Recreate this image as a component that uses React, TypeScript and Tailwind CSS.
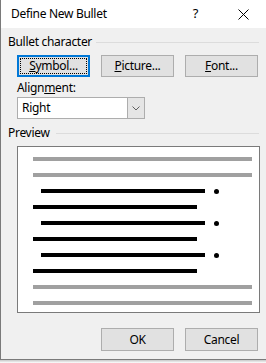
import React from "react";

const font = { fontFamily: '"Noto Sans", "Open Sans", sans-serif' };

function Btn({ children, focused }: { children: React.ReactNode; focused?: boolean }) {
  if (focused) {
    return (
      <div className="w-[73px] h-[22px] bg-[#e1e1e1] border-2 border-[#0078d7] flex items-center justify-center p-[1px]">
        <div className="w-full h-full border border-dotted border-black flex items-center justify-center text-[12px] text-black leading-none">
          {children}
        </div>
      </div>
    );
  }
  return (
    <div className="w-[73px] h-[22px] bg-[#e1e1e1] border border-[#adadad] flex items-center justify-center text-[12px] text-black leading-none">
      {children}
    </div>
  );
}

function Line({ gray, indent, short }: { gray?: boolean; indent?: boolean; short?: boolean }) {
  if (gray) return <div className="h-[4px] w-[219px] bg-[#a0a0a0]" />;
  return (
    <div className="h-[4px] flex items-center">
      <div className={(indent ? "ml-[8px] " : "") + "h-[4px] w-[164px] bg-black"} />
      {indent && !short && <div className="ml-[9px] w-[5px] h-[5px] rounded-full bg-black" />}
    </div>
  );
}

export default function App() {
  return (
    <div className="w-[266px] h-[363px] bg-white overflow-hidden tracking-[-0.3px]" style={font}>
      <div className="w-[266px] h-[360px] border-l border-b border-[#7a7a7a] flex flex-col">
        <div className="h-[28px] bg-white flex items-center text-[12px] text-black">
          <span className="ml-[10px]">Define New Bullet</span>
          <span className="ml-auto mr-[40px] text-[13px]">?</span>
          <svg width="11" height="11" viewBox="0 0 11 11" className="mr-[17px]">
            <path d="M0.5 0.5 L10.5 10.5 M10.5 0.5 L0.5 10.5" stroke="#000" strokeWidth="1" />
          </svg>
        </div>
        <div className="flex-1 bg-[#f0f0f0] flex flex-col text-[12px] text-black">
          <div className="mt-[6px] flex items-center h-[16px]">
            <span className="ml-[7px]">Bullet character</span>
            <div className="flex-1 h-px bg-[#dcdcdc] ml-[4px] mr-[7px]" />
          </div>
          <div className="mt-[5px] ml-[16px] flex gap-[11px]">
            <Btn focused>
              <span><u>S</u>ymbol...</span>
            </Btn>
            <Btn>
              <span><u>P</u>icture...</span>
            </Btn>
            <Btn>
              <span><u>F</u>ont...</span>
            </Btn>
          </div>
          <div className="mt-[3px] ml-[16px] h-[16px] flex items-center">
            <span>Align<u>m</u>ent:</span>
          </div>
          <div className="mt-[1px] ml-[16px] w-[128px] h-[22px] bg-white border border-[#adadad] flex">
            <div className="flex-1 flex items-center pl-[4px]">Right</div>
            <div className="w-[17px] bg-[#e5e5e5] border-l border-[#adadad] flex items-center justify-center">
              <svg width="8" height="5" viewBox="0 0 8 5">
                <path d="M0.5 0.5 L4 4 L7.5 0.5" stroke="#606060" fill="none" strokeWidth="1" />
              </svg>
            </div>
          </div>
          <div className="mt-[6px] flex items-center h-[16px]">
            <span className="ml-[7px]">Preview</span>
            <div className="flex-1 h-px bg-[#dcdcdc] ml-[6px] mr-[7px]" />
          </div>
          <div className="mt-[5px] ml-[16px] w-[243px] h-[167px] bg-white border border-[#7a7a7a] pt-[10px] pl-[15px] flex flex-col gap-[12px]">
            <Line gray />
            <Line gray />
            <Line indent />
            <Line />
            <Line indent />
            <Line />
            <Line indent />
            <Line />
            <Line gray />
            <Line gray />
          </div>
          <div className="mt-[15px] ml-[100px] flex gap-[11px]">
            <div className="w-[73px] h-[23px] bg-[#e1e1e1] border border-[#adadad] flex items-center justify-center">OK</div>
            <div className="w-[73px] h-[23px] bg-[#e1e1e1] border border-[#adadad] flex items-center justify-center">Cancel</div>
          </div>
        </div>
      </div>
      <div className="h-[3px] bg-gradient-to-b from-[#c8c8c8] to-white" />
    </div>
  );
}
